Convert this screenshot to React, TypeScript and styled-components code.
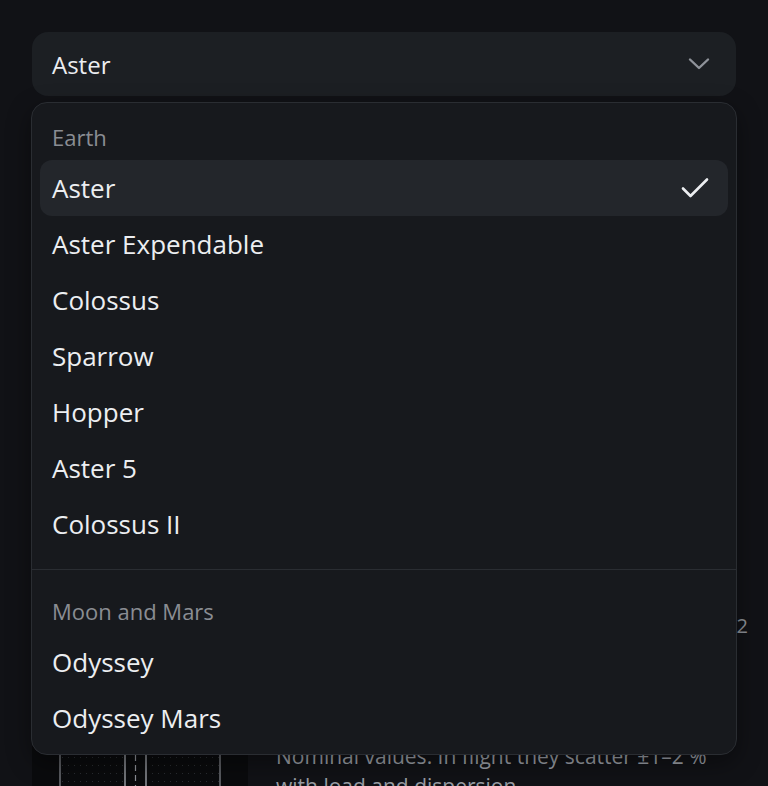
import React from "react";
import styled, { createGlobalStyle } from "styled-components";

const Global = createGlobalStyle`
  html, body { margin: 0; padding: 0; background: #111216; }
  body { font-family: "Open Sans", "Noto Sans", sans-serif; color: #e8eaed; overflow: hidden; }
  * { box-sizing: border-box; }
`;

const Page = styled.div`
  position: relative;
  width: 768px;
  height: 786px;
  padding: 32px;
  overflow: hidden;
`;

const Trigger = styled.button`
  display: flex;
  align-items: center;
  justify-content: space-between;
  width: 100%;
  height: 64px;
  padding: 0 26px 0 20px;
  border: none;
  border-radius: 16px;
  background: #1c1f23;
  color: #eceef1;
  font-family: inherit;
  font-size: 24px;
`;

const Content = styled.div`
  display: flex;
  flex-direction: column;
  margin-top: 24px;
`;

const Spacer = styled.div<{ $h: number }>`
  height: ${(p) => p.$h}px;
`;

const ValueRow = styled.div`
  display: flex;
  justify-content: space-between;
  align-items: center;
  height: 40px;
  margin-right: -12px;
  font-size: 20px;
  color: #8c9097;
`;

const Figure = styled.div`
  display: grid;
  grid-template-columns: 216px 1fr;
  gap: 28px;
`;

const Diagram = styled.div`
  height: 200px;
  background: #0a0b0d;
`;

const Note = styled.p`
  margin: 0;
  padding-top: 56px;
  font-size: 21px;
  line-height: 30px;
  color: #9a9ea5;
`;

const Popover = styled.div`
  position: absolute;
  top: 102px;
  left: 31px;
  width: 706px;
  padding: 8px;
  border: 1px solid #2a2d32;
  border-radius: 16px;
  background: #17191d;
  box-shadow: 0 8px 24px rgba(0, 0, 0, 0.4);
`;

const GroupLabel = styled.div`
  display: flex;
  align-items: center;
  height: 49px;
  padding: 2px 12px 0;
  font-size: 22px;
  color: #8a8d93;
`;

const Item = styled.div<{ $active?: boolean }>`
  display: flex;
  align-items: center;
  justify-content: space-between;
  height: 56px;
  padding: 0 19px 0 12px;
  border-radius: 12px;
  font-size: 26px;
  color: #eceef1;
  background: ${(p) => (p.$active ? "#23262b" : "transparent")};
`;

const Separator = styled.div`
  height: 1px;
  margin: 17px -8px 15px;
  background: #2a2d32;
`;

const Chevron = () => (
  <svg width="22" height="14" viewBox="0 0 22 14" fill="none">
    <path d="M2 2.5 L11 11 L20 2.5" stroke="#8f939a" strokeWidth="2.4" strokeLinecap="round" strokeLinejoin="round" />
  </svg>
);

const Check = () => (
  <svg width="28" height="22" viewBox="0 0 28 22" fill="none">
    <path d="M2 11.5 L9.5 19 L26 2.5" stroke="#eceef1" strokeWidth="2.6" strokeLinecap="round" strokeLinejoin="round" />
  </svg>
);

const DiagramArt = () => (
  <svg width="216" height="200" viewBox="0 0 216 200">
    <defs>
      <pattern id="dots" width="6" height="8" patternUnits="userSpaceOnUse">
        <rect x="0" y="0" width="1" height="1" fill="#2a2c31" />
      </pattern>
    </defs>
    <rect x="29" y="0" width="64" height="200" fill="url(#dots)" />
    <rect x="115" y="0" width="72" height="200" fill="url(#dots)" />
    <line x1="28" y1="0" x2="28" y2="200" stroke="#8d9097" strokeWidth="1.2" />
    <line x1="93" y1="0" x2="93" y2="200" stroke="#8d9097" strokeWidth="1.6" />
    <line x1="103.5" y1="0" x2="103.5" y2="200" stroke="#8d9097" strokeWidth="1.2" strokeDasharray="6 4" />
    <line x1="114" y1="0" x2="114" y2="200" stroke="#8d9097" strokeWidth="1.6" />
    <line x1="188" y1="0" x2="188" y2="200" stroke="#8d9097" strokeWidth="1.2" />
  </svg>
);

const earth = ["Aster", "Aster Expendable", "Colossus", "Sparrow", "Hopper", "Aster 5", "Colossus II"];
const moon = ["Odyssey", "Odyssey Mars"];

export default function App() {
  return (
    <Page>
      <Global />
      <Trigger>
        <span>Aster</span>
        <Chevron />
      </Trigger>
      <Content>
        <Spacer $h={485} />
        <ValueRow>
          <span>Height</span>
          <span>1.2</span>
        </ValueRow>
        <Spacer $h={40} />
        <Figure>
          <Diagram>
            <DiagramArt />
          </Diagram>
          <Note>
            Nominal values. In flight they scatter ±1–2 % with load and dispersion.
          </Note>
        </Figure>
      </Content>
      <Popover>
        <GroupLabel>Earth</GroupLabel>
        {earth.map((name, i) => (
          <Item key={name} $active={i === 0}>
            <span>{name}</span>
            {i === 0 && <Check />}
          </Item>
        ))}
        <Separator />
        <GroupLabel>Moon and Mars</GroupLabel>
        {moon.map((name) => (
          <Item key={name}>
            <span>{name}</span>
          </Item>
        ))}
      </Popover>
    </Page>
  );
}
